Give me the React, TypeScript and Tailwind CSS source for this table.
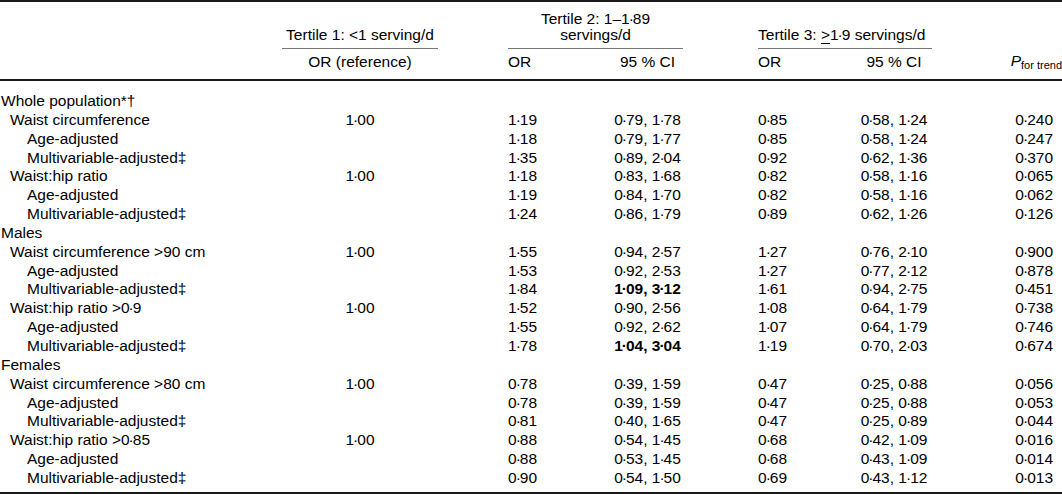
import React from 'react';

type Row = {
  label: string;
  level: 0 | 1 | 2;
  ref?: string;
  t2or?: string;
  t2ci?: string;
  t2bold?: boolean;
  t3or?: string;
  t3ci?: string;
  p?: string;
};

const rows: Row[] = [
  { label: 'Whole population*†', level: 0 },
  { label: 'Waist circumference', level: 1, ref: '1·00', t2or: '1·19', t2ci: '0·79, 1·78', t3or: '0·85', t3ci: '0·58, 1·24', p: '0·240' },
  { label: 'Age-adjusted', level: 2, t2or: '1·18', t2ci: '0·79, 1·77', t3or: '0·85', t3ci: '0·58, 1·24', p: '0·247' },
  { label: 'Multivariable-adjusted‡', level: 2, t2or: '1·35', t2ci: '0·89, 2·04', t3or: '0·92', t3ci: '0·62, 1·36', p: '0·370' },
  { label: 'Waist:hip ratio', level: 1, ref: '1·00', t2or: '1·18', t2ci: '0·83, 1·68', t3or: '0·82', t3ci: '0·58, 1·16', p: '0·065' },
  { label: 'Age-adjusted', level: 2, t2or: '1·19', t2ci: '0·84, 1·70', t3or: '0·82', t3ci: '0·58, 1·16', p: '0·062' },
  { label: 'Multivariable-adjusted‡', level: 2, t2or: '1·24', t2ci: '0·86, 1·79', t3or: '0·89', t3ci: '0·62, 1·26', p: '0·126' },
  { label: 'Males', level: 0 },
  { label: 'Waist circumference >90 cm', level: 1, ref: '1·00', t2or: '1·55', t2ci: '0·94, 2·57', t3or: '1·27', t3ci: '0·76, 2·10', p: '0·900' },
  { label: 'Age-adjusted', level: 2, t2or: '1·53', t2ci: '0·92, 2·53', t3or: '1·27', t3ci: '0·77, 2·12', p: '0·878' },
  { label: 'Multivariable-adjusted‡', level: 2, t2or: '1·84', t2ci: '1·09, 3·12', t2bold: true, t3or: '1·61', t3ci: '0·94, 2·75', p: '0·451' },
  { label: 'Waist:hip ratio >0·9', level: 1, ref: '1·00', t2or: '1·52', t2ci: '0·90, 2·56', t3or: '1·08', t3ci: '0·64, 1·79', p: '0·738' },
  { label: 'Age-adjusted', level: 2, t2or: '1·55', t2ci: '0·92, 2·62', t3or: '1·07', t3ci: '0·64, 1·79', p: '0·746' },
  { label: 'Multivariable-adjusted‡', level: 2, t2or: '1·78', t2ci: '1·04, 3·04', t2bold: true, t3or: '1·19', t3ci: '0·70, 2·03', p: '0·674' },
  { label: 'Females', level: 0 },
  { label: 'Waist circumference >80 cm', level: 1, ref: '1·00', t2or: '0·78', t2ci: '0·39, 1·59', t3or: '0·47', t3ci: '0·25, 0·88', p: '0·056' },
  { label: 'Age-adjusted', level: 2, t2or: '0·78', t2ci: '0·39, 1·59', t3or: '0·47', t3ci: '0·25, 0·88', p: '0·053' },
  { label: 'Multivariable-adjusted‡', level: 2, t2or: '0·81', t2ci: '0·40, 1·65', t3or: '0·47', t3ci: '0·25, 0·89', p: '0·044' },
  { label: 'Waist:hip ratio >0·85', level: 1, ref: '1·00', t2or: '0·88', t2ci: '0·54, 1·45', t3or: '0·68', t3ci: '0·42, 1·09', p: '0·016' },
  { label: 'Age-adjusted', level: 2, t2or: '0·88', t2ci: '0·53, 1·45', t3or: '0·68', t3ci: '0·43, 1·09', p: '0·014' },
  { label: 'Multivariable-adjusted‡', level: 2, t2or: '0·90', t2ci: '0·54, 1·50', t3or: '0·69', t3ci: '0·43, 1·12', p: '0·013' },
];

const indent = ['pl-[1px]', 'pl-[10px]', 'pl-[27px]'];

// the journal's middle dot sits tight against the digits
function Num({ v }: { v?: string }) {
  if (!v) return null;
  const parts = v.split('·');
  return (
    <>
      {parts.map((p, i) => (
        <React.Fragment key={i}>
          {i > 0 && <span className="-mx-[1px]">·</span>}
          {p}
        </React.Fragment>
      ))}
    </>
  );
}

export default function App() {
  return (
    <div className="w-[1062px] h-[494px] overflow-hidden bg-white text-black font-['Liberation_Sans',Arial,sans-serif] text-[15.5px]">
      <div className="border-t-2 border-b-2 border-[#1a1a1a]">
        <table className="w-[1062px] table-fixed border-separate border-spacing-0">
          <colgroup>
            <col className="w-[282px]" />
            <col className="w-[156px]" />
            <col className="w-[70px]" />
            <col className="w-[104px]" />
            <col className="w-[71px]" />
            <col className="w-[75px]" />
            <col className="w-[98px]" />
            <col className="w-[76px]" />
            <col className="w-[130px]" />
          </colgroup>
          <thead>
            <tr className="leading-[16px]">
              <th />
              <th className="pt-[9px] pb-[5px] align-bottom font-normal text-center whitespace-nowrap border-b border-[#777]">
                Tertile 1: &lt;1 serving/d
              </th>
              <th />
              <th colSpan={2} className="pt-[9px] pb-[5px] align-bottom font-normal text-center border-b border-[#777]">
                Tertile 2: 1–1<span className="-mx-[1px]">·</span>89
                <br />
                servings/d
              </th>
              <th />
              <th colSpan={2} className="pt-[9px] pb-[5px] align-bottom font-normal text-left whitespace-nowrap border-b border-[#777]">
                Tertile 3: <span className="underline underline-offset-[3px]">&gt;</span>1<span className="-mx-[1px]">·</span>9 servings/d
              </th>
              <th />
            </tr>
            <tr className="leading-[16px]">
              <th className="pt-[4px] pb-[9px] border-b-2 border-[#1a1a1a]" />
              <th className="pt-[4px] pb-[9px] font-normal text-center border-b-2 border-[#1a1a1a]">OR (reference)</th>
              <th className="pt-[4px] pb-[9px] border-b-2 border-[#1a1a1a]" />
              <th className="pt-[4px] pb-[9px] font-normal text-left border-b-2 border-[#1a1a1a]">OR</th>
              <th className="pt-[4px] pb-[9px] font-normal text-center whitespace-nowrap border-b-2 border-[#1a1a1a]">95 % CI</th>
              <th className="pt-[4px] pb-[9px] border-b-2 border-[#1a1a1a]" />
              <th className="pt-[4px] pb-[9px] font-normal text-left border-b-2 border-[#1a1a1a]">OR</th>
              <th className="pt-[4px] pb-[9px] font-normal text-center whitespace-nowrap border-b-2 border-[#1a1a1a]">95 % CI</th>
              <th className="pt-[4px] pb-[9px] font-normal text-right whitespace-nowrap border-b-2 border-[#1a1a1a]">
                <span className="italic">P</span>
                <span className="relative top-[3px] text-[11px]">for trend</span>
              </th>
            </tr>
          </thead>
          <tbody className="leading-[18.85px]">
            {rows.map((r, i) => {
              const pad = i === 0 ? 'pt-[11px]' : i === rows.length - 1 ? 'pb-[4px]' : '';
              return (
                <tr key={i}>
                  <td className={`${pad} ${indent[r.level]} whitespace-nowrap`}><Num v={r.label} /></td>
                  <td className={`${pad} text-center`}><Num v={r.ref} /></td>
                  <td className={pad} />
                  <td className={`${pad} text-left`}><Num v={r.t2or} /></td>
                  <td className={`${pad} text-center whitespace-nowrap ${r.t2bold ? 'font-bold' : ''}`}><Num v={r.t2ci} /></td>
                  <td className={pad} />
                  <td className={`${pad} text-left`}><Num v={r.t3or} /></td>
                  <td className={`${pad} text-center whitespace-nowrap`}><Num v={r.t3ci} /></td>
                  <td className={`${pad} text-right pr-[9px]`}><Num v={r.p} /></td>
                </tr>
              );
            })}
          </tbody>
        </table>
      </div>
    </div>
  );
}
